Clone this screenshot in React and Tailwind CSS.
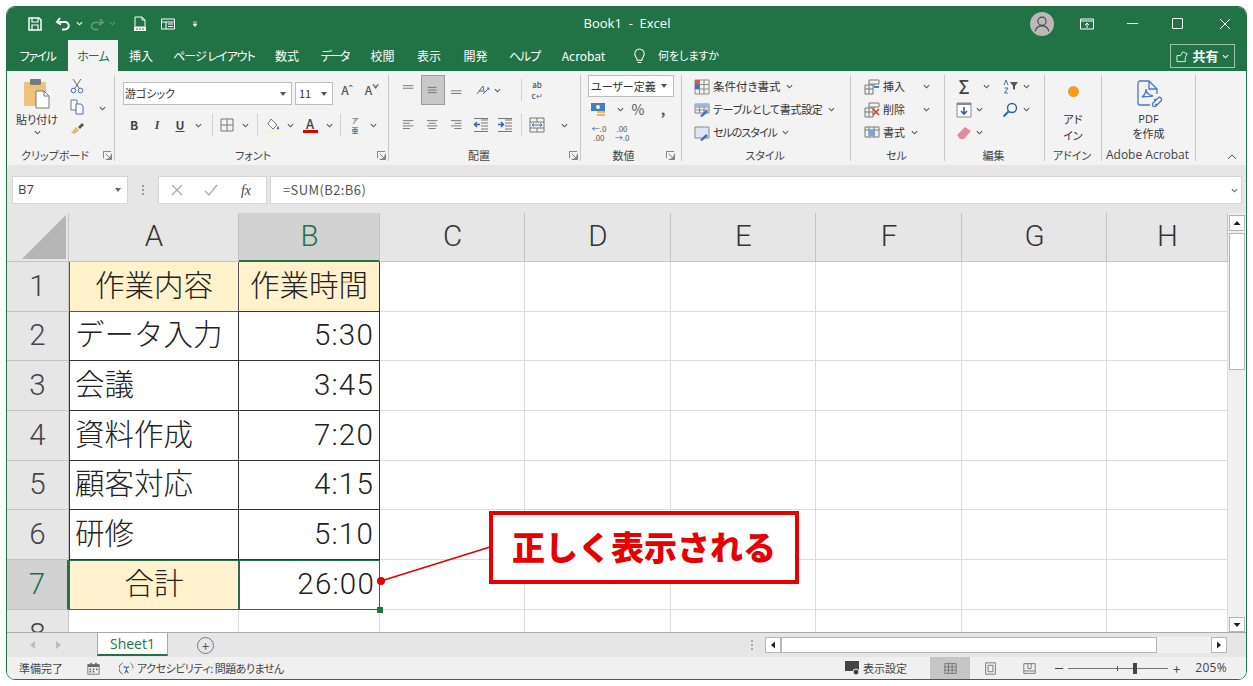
import { Fragment } from 'react'

const Chev = ({ className = 'text-[#555]' }) => (
  <svg viewBox="0 0 8 5" className={`w-[7px] h-[5px] shrink-0 ${className}`}>
    <path d="M1 1l3 3 3-3" fill="none" stroke="currentColor" strokeWidth="1.2" />
  </svg>
)

const Slot = ({ className, children }) => (
  <div className={`flex h-full shrink-0 items-center justify-center ${className}`}>{children}</div>
)

const Sep = ({ className }) => <div className={`h-[22px] w-px shrink-0 self-center bg-[#d0d0d0] ${className}`} />

const Launcher = () => (
  <svg viewBox="0 0 10 10" className="h-[9px] w-[9px] shrink-0 text-[#666]">
    <path d="M.5 8V.5H9M9.5 9.5H3M9.5 9.5V3M3 3l5.5 5.5M8.5 5v3.5H5" fill="none" stroke="currentColor" strokeWidth=".9" />
  </svg>
)

function Group({ className, label, launcher, labelClass = '', children }) {
  return (
    <div className={`flex h-full shrink-0 flex-col border-r border-[#c8c8c8] ${className}`}>
      <div className="min-h-0 flex-1">{children}</div>
      <div className={`flex h-[14px] items-center pr-[2px] pt-[2px] text-[11px] leading-none text-[#444] ${labelClass}`}>
        <span className="flex-1 whitespace-nowrap text-center">{label}</span>
        {launcher && <Launcher />}
      </div>
    </div>
  )
}

const Ico = ({ children, className = 'h-4 w-4' }) => (
  <svg viewBox="0 0 16 16" className={`shrink-0 ${className}`} fill="none">{children}</svg>
)

// horizontal text-lines icon for the alignment buttons
const Lines = ({ ys, xs }) => (
  <Ico className="h-[14px] w-[14px]">
    {ys.map((y, i) => (
      <path key={y} d={`M${xs[i][0]} ${y}H${xs[i][1]}`} stroke="#777" strokeWidth="1.1" />
    ))}
  </Ico>
)

const Paste = () => (
  <svg viewBox="0 0 26 31" className="h-[31px] w-[26px]">
    <rect x="0" y="4" width="22" height="24" rx="1" fill="#ebc37b" />
    <rect x="6" y="1" width="11" height="6" rx="1" fill="#7a7a7a" />
    <path d="M12 13h8l5 5v12H12z" fill="#fff" stroke="#777" />
    <path d="M20 13v5h5" fill="none" stroke="#777" />
  </svg>
)

const tabs = [
  ['ファイル', 'w-[61px] tracking-[-1.500px]'],
  ['ホーム', 'w-[50px] tracking-[-1px]'],
  ['挿入', 'w-[46px] text-[12px]'],
  ['ページ レイアウト', 'w-[100px] tracking-[-1px]'],
  ['数式', 'w-[46px] text-[12px]'],
  ['データ', 'w-[49px] tracking-[-2px]'],
  ['校閲', 'w-[47px] text-[12px]'],
  ['表示', 'w-[46px] text-[12px]'],
  ['開発', 'w-[47px] text-[12px]'],
  ['ヘルプ', 'w-[51px] tracking-[-1px]'],
  ['Acrobat', 'w-[67px]'],
]

const colHeads = ['A', 'B', 'C', 'D', 'E', 'F', 'G', 'H']
const rows = [
  ['作業内容', '作業時間'],
  ['データ入力', '5:30'],
  ['会議', '3:45'],
  ['資料作成', '7:20'],
  ['顧客対応', '4:15'],
  ['研修', '5:10'],
  ['合計', '26:00'],
  ['', ''],
]
const blanks = [0, 1, 2, 3, 4, 5]

const rowHead = 'flex items-center justify-center border-r border-b border-[#c4c4c4] bg-[#e6e6e6] text-[#444]'
const darkA = 'flex items-center border-x border-b border-[#333] pl-[5px] text-[#222]'
const darkB = 'flex items-center justify-end border-r border-b border-[#333] pr-[5px] tracking-[1.200px] text-[#222]'
const gridCell = 'border-r border-b border-[#dcdcdc]'

function cellA(i) {
  if (i === 0) return 'flex items-center justify-center border-x border-b border-[#555] bg-[#fff2cc] text-[#222]'
  if (i === 6) return 'flex items-center justify-center border border-[#2f6f4f] bg-[#fff2cc] text-[#222]'
  if (i === 7) return gridCell
  return darkA
}

function cellB(i) {
  if (i === 0) return 'flex items-center justify-center border-r border-b border-[#333] bg-[#fff2cc] text-[#222]'
  if (i === 6) return 'relative flex items-center justify-end border-[1.500px] border-[#217346] pr-[4px] tracking-[1.200px] text-[#222]'
  if (i === 7) return gridCell
  return darkB
}

const ScrollBtn = ({ className, d }) => (
  <div className={`flex shrink-0 items-center justify-center border border-[#b5b5b5] bg-white ${className}`}>
    <svg viewBox="0 0 8 8" className="h-2 w-2"><path d={d} fill="#222" /></svg>
  </div>
)

export default function App() {
  return (
    <div className="h-[686px] w-[1253px] overflow-hidden bg-white pl-[6px] pt-[6px] font-['Noto_Sans_CJK_JP',sans-serif] [font-feature-settings:'palt']">
      <div className="flex h-[674px] w-[1241px] flex-col overflow-hidden rounded-[9px] border border-[#217346]">
        {/* Title bar */}
        <div className="flex h-[33px] shrink-0 items-center bg-[#217346] text-white">
          <div className="flex h-full w-[199px] items-center">
            <Slot className="ml-[20px] w-[16px]">
              <Ico>
                <path d="M2 2h10l2 2v10H2z" stroke="#fff" strokeWidth="1.5" />
                <path d="M5 2v4h6V2M5 14V9h6v5" stroke="#fff" strokeWidth="1.2" />
              </Ico>
            </Slot>
            <Slot className="ml-[11px] w-[18px]">
              <Ico>
                <path d="M5 2L2 6l4 2.500M2.500 6H10a3.500 3.500 0 0 1 0 7.500H7" stroke="#fff" strokeWidth="2" />
              </Ico>
            </Slot>
            <Slot className="ml-[2px] w-[10px]"><Chev className="text-white" /></Slot>
            <Slot className="ml-[5px] w-[16px]">
              <Ico>
                <path d="M11 3l3 3.500-4 2.500M13.500 6.500H6a3.500 3.500 0 0 0 0 7h3" stroke="#5f9a7c" strokeWidth="1.700" />
              </Ico>
            </Slot>
            <Slot className="ml-[2px] w-[10px]"><Chev className="text-[#5f9a7c]" /></Slot>
            <Slot className="ml-[15px] w-[16px]">
              <Ico>
                <path d="M3 1h7l3 3v7H3zM10 1v3h3" stroke="#fff" />
                <path d="M2 11h12v4H2z" fill="#fff" />
                <path d="M4 13h2M7 13h2M10 13h2" stroke="#217346" />
              </Ico>
            </Slot>
            <Slot className="ml-[12px] w-[16px]">
              <Ico>
                <path d="M1.500 3h13v10h-13zM1.500 6h13M6 6v7M8 8h5M8 10.500h5" stroke="#fff" />
              </Ico>
            </Slot>
            <Slot className="ml-[15px] w-[8px]">
              <svg viewBox="0 0 6 6" className="h-[6px] w-[6px]"><path d="M1 1h4M1 3h4l-2 2.500z" stroke="#fff" strokeWidth=".7" fill="#fff" /></svg>
            </Slot>
          </div>
          <div className="flex-1 pl-[20px] pt-[1px] text-center font-['Open_Sans',sans-serif] text-[13px]">Book1&nbsp; - &nbsp;Excel</div>
          <div className="flex h-full w-[218px] items-center">
            <div className="ml-[2px] flex h-[24px] w-[24px] items-center justify-center rounded-full bg-[#b9b9b9]">
              <svg viewBox="0 0 24 24" className="h-[22px] w-[22px]" fill="none" stroke="#444" strokeWidth="1.2">
                <circle cx="12" cy="9" r="4.500" />
                <path d="M4.500 20c1-4 4-6 7.500-6s6.500 2 7.500 6" />
              </svg>
            </div>
            <Slot className="ml-[25px] w-[16px]">
              <Ico>
                <path d="M1.500 3h13v10h-13zM1.500 5h13" stroke="#fff" />
                <path d="M8 12V7M6 9l2-2 2 2" stroke="#fff" />
              </Ico>
            </Slot>
            <Slot className="ml-[30px] w-[14px]"><div className="h-px w-[11px] bg-white" /></Slot>
            <Slot className="ml-[31px] w-[14px]"><div className="h-[11px] w-[11px] rounded-[1px] border border-white" /></Slot>
            <Slot className="ml-[34px] w-[14px]">
              <svg viewBox="0 0 12 12" className="h-[12px] w-[12px]"><path d="M1 1l10 10M11 1L1 11" stroke="#fff" /></svg>
            </Slot>
          </div>
        </div>

        {/* Tabs */}
        <div className="flex h-[31px] shrink-0 items-end bg-[#217346] text-[12px] text-white">
          {tabs.map(([name, w]) => (
            <div
              key={name}
              className={`flex h-[31px] shrink-0 items-center justify-center whitespace-nowrap ${w} ${name === 'ホーム' ? 'bg-[#f3f3f3] text-[#217346]' : ''}`}
            >
              {name}
            </div>
          ))}
          <div className="ml-[15px] flex h-[31px] items-center">
            <svg viewBox="0 0 16 18" className="h-[18px] w-[15px]" fill="none" stroke="#fff" strokeWidth="1.1">
              <path d="M5.500 13.500c0-3-2.500-3.500-2.500-7a5 5 0 0 1 10 0c0 3.500-2.500 4-2.500 7zM6 16h4" />
            </svg>
            <span className="ml-[11px] text-[11px]">何をしますか</span>
          </div>
          <div className="flex-1" />
          <div className="mb-[3px] mr-[11px] flex h-[24px] w-[65px] items-center justify-center gap-[3px] border border-[#9cc5ae] text-[13px] font-bold">
            <svg viewBox="0 0 14 14" className="h-[13px] w-[13px]" fill="none" stroke="#fff" strokeWidth=".9">
              <path d="M1 12.500V6h4l2-4 5 2-2 4M1 12.500h9V8" />
            </svg>
            共有
            <Chev className="text-white" />
          </div>
        </div>

        {/* Ribbon */}
        <div className="flex h-[94px] shrink-0 items-stretch bg-[#f3f3f3] py-[4px] text-[#333]">
          <Group className="w-[108px]" label="クリップボード" launcher>
            <div className="flex h-full">
              <div className="ml-[1px] flex w-[58px] flex-col items-center pt-[3px]">
                <Paste />
                <span className="mt-[3px] whitespace-nowrap text-[11px] leading-[14px]">貼り付け</span>
                <div className="mt-[4px]"><Chev /></div>
              </div>
              <div className="ml-[3px] flex w-[16px] flex-col items-center gap-[5px] pt-[3px]">
                <Ico>
                  <path d="M4 1l6 9M12 1L6 10" stroke="#666" />
                  <circle cx="4.500" cy="12.500" r="2.300" stroke="#3f6fb5" />
                  <circle cx="11.500" cy="12.500" r="2.300" stroke="#3f6fb5" />
                </Ico>
                <Ico>
                  <path d="M2 1h6v10H2z" fill="#fff" stroke="#777" />
                  <path d="M7 5h5l2 2v8H7z" fill="#fff" stroke="#3f6fb5" />
                </Ico>
                <Ico>
                  <path d="M9 7l4-4 2 2-4 4z" fill="#555" />
                  <path d="M2 13l5-6 3 3-4 4z" fill="#e5b868" />
                </Ico>
              </div>
              <Slot className="ml-[9px] w-[16px] pb-[6px]"><Chev /></Slot>
            </div>
          </Group>

          <Group className="w-[274px]" label="フォント" launcher labelClass="pl-[14px]">
            <div className="flex h-[30px] items-end pl-[8px]">
              <div className="flex h-[23px] w-[169px] items-center justify-between border border-[#bdbdbd] bg-white pl-[1px] pr-[5px] text-[11px]">
                游ゴシック
                <svg viewBox="0 0 6 4" className="h-[4px] w-[6px]"><path d="M0 0h6L3 4z" fill="#555" /></svg>
              </div>
              <div className="ml-[3px] flex h-[23px] w-[38px] items-center justify-between border border-[#bdbdbd] bg-white pl-[3px] pr-[5px] text-[11px]">
                11
                <svg viewBox="0 0 6 4" className="h-[4px] w-[6px]"><path d="M0 0h6L3 4z" fill="#555" /></svg>
              </div>
              <Slot className="ml-[5px] h-[23px] w-[18px] text-[12px] font-medium text-[#555]">Aˆ</Slot>
              <Slot className="ml-[7px] h-[23px] w-[18px] text-[12px] font-medium text-[#555]">Aˇ</Slot>
            </div>
            <div className="mt-[8px] flex h-[24px] items-center pl-[8px] text-[12px] text-[#444]">
              <Slot className="w-[22px] font-bold">B</Slot>
              <Slot className="w-[24px] font-['Liberation_Serif',serif] font-bold italic">I</Slot>
              <Slot className="w-[22px] font-bold underline">U</Slot>
              <Slot className="w-[14px]"><Chev /></Slot>
              <Sep className="ml-[7px]" />
              <Slot className="ml-[6px] w-[16px]">
                <Ico>
                  <path d="M2 2h12v12H2zM8 2v12M2 8h12" stroke="#777" />
                </Ico>
              </Slot>
              <Slot className="w-[20px]"><Chev /></Slot>
              <Sep className="ml-[2px]" />
              <Slot className="ml-[1px] w-[28px]">
                <Ico>
                  <path d="M6 2l6 6-4 4-5-5z" fill="#fff" stroke="#777" />
                  <path d="M13 9c1 1.500 1.500 2 1 3-.5.500-1.500.500-2 0-.3-1 .5-2 1-3z" fill="#3f6fb5" />
                  <path d="M1 14h14v2H1z" fill="#fff0c0" />
                </Ico>
              </Slot>
              <Slot className="w-[6px]"><Chev /></Slot>
              <Slot className="w-[34px]">
                <div className="flex flex-col items-center leading-none">
                  <span className="text-[13px] font-medium leading-[13px]">A</span>
                  <div className="h-[3px] w-[15px] bg-[#e00000]" />
                </div>
              </Slot>
              <Slot className="w-[4px]"><Chev /></Slot>
              <Sep className="ml-[9px]" />
              <Slot className="ml-[9px] w-[10px] flex-col text-[7px] leading-[10px]">
                <span>ア</span>
                <span>亜</span>
              </Slot>
              <Slot className="w-[26px]"><Chev /></Slot>
            </div>
          </Group>

          <Group className="w-[192px]" label="配置" launcher>
            <div className="flex h-[30px] items-end pl-[8px]">
              <Slot className="h-[23px] w-[24px]"><Lines ys={[3, 6]} xs={[[1, 13], [1, 13]]} /></Slot>
              <Slot className="h-[23px] w-[24px] border border-[#9a9a9a] bg-[#c8c8c8]"><Lines ys={[5, 8, 11]} xs={[[2, 12], [2, 12], [2, 12]]} /></Slot>
              <Slot className="h-[23px] w-[24px]"><Lines ys={[9, 12]} xs={[[1, 13], [1, 13]]} /></Slot>
              <Slot className="ml-[6px] h-[23px] w-[16px]">
                <Ico>
                  <path d="M2 12L8 4l1 6M4 9h4" stroke="#666" />
                  <path d="M8 12l6-6M12 6h2v2" stroke="#3f6fb5" />
                </Ico>
              </Slot>
              <Slot className="h-[23px] w-[12px]"><Chev /></Slot>
              <Sep className="ml-[18px]" />
              <Slot className="ml-[7px] h-[23px] w-[16px] flex-col text-[8px] font-medium leading-[11px] text-[#555]">
                <span>ab</span>
                <span>c<span className="text-[#3f6fb5]">↵</span></span>
              </Slot>
            </div>
            <div className="mt-[8px] flex h-[24px] items-center pl-[8px]">
              <Slot className="w-[24px]"><Lines ys={[3, 6, 9, 12]} xs={[[1, 13], [1, 9], [1, 13], [1, 9]]} /></Slot>
              <Slot className="w-[24px]"><Lines ys={[3, 6, 9, 12]} xs={[[1, 13], [3, 11], [1, 13], [3, 11]]} /></Slot>
              <Slot className="w-[24px]"><Lines ys={[3, 6, 9, 12]} xs={[[1, 13], [5, 13], [1, 13], [5, 13]]} /></Slot>
              <Slot className="w-[24px]">
                <Ico>
                  <path d="M8 3h7M8 6h7M8 9h7M8 12h7M1 14.500h14M1 1.500h14" stroke="#777" />
                  <path d="M7 7.500H1.500M4 5L1.500 7.500 4 10" stroke="#2b62a8" strokeWidth="1.400" />
                </Ico>
              </Slot>
              <Slot className="w-[24px]">
                <Ico>
                  <path d="M8 3h7M8 6h7M8 9h7M8 12h7M1 14.500h14M1 1.500h14" stroke="#777" />
                  <path d="M1 7.500h5.500M4 5l2.500 2.500L4 10" stroke="#2b62a8" strokeWidth="1.400" />
                </Ico>
              </Slot>
              <Sep className="ml-[4px]" />
              <Slot className="ml-[7px] w-[16px]">
                <Ico>
                  <path d="M1 1h14v14H1zM1 5h14M1 11h14M8 1v4M8 11v4" stroke="#777" />
                  <path d="M3 8h10M5 6.500L3 8l2 1.500M11 6.500L13 8l-2 1.500" stroke="#3f6fb5" />
                </Ico>
              </Slot>
              <Slot className="ml-[15px] w-[8px]"><Chev /></Slot>
            </div>
          </Group>

          <Group className="w-[101px]" label="数値" launcher labelClass="pr-[6px]">
            <div className="ml-[7px] flex h-[22px] w-[86px] items-center justify-between border border-[#bdbdbd] bg-white pl-[2px] pr-[6px] text-[11px]">
              ユーザー定義
              <svg viewBox="0 0 6 4" className="h-[4px] w-[6px]"><path d="M0 0h6L3 4z" fill="#555" /></svg>
            </div>
            <div className="flex h-[24px] items-center pl-[9px]">
              <Slot className="w-[16px]">
                <Ico>
                  <path d="M1 2h14v8H1z" fill="#3f7fc0" />
                  <circle cx="8" cy="6" r="2" fill="#fff" />
                  <path d="M7 10h8v2H7zM7 13h8v2H7z" fill="#e5b868" />
                </Ico>
              </Slot>
              <Slot className="ml-[10px] w-[8px]"><Chev /></Slot>
              <Slot className="ml-[2px] w-[24px] text-[14px] text-[#555]">%</Slot>
              <Slot className="ml-[3px] w-[20px] text-[14px] font-bold text-[#555]">,</Slot>
            </div>
            <div className="flex h-[23px] items-center pl-[10px] text-[8px] leading-[9px] text-[#555]">
              <Slot className="w-[16px] flex-col">
                <span><span className="text-[#2b62a8]">←</span>.0</span>
                <span>.00</span>
              </Slot>
              <Slot className="ml-[7px] w-[16px] flex-col">
                <span>.00</span>
                <span><span className="text-[#2b62a8]">→</span>.0</span>
              </Slot>
            </div>
          </Group>

          <Group className="w-[169px]" label="スタイル">
            <div className="flex flex-col pl-[12px] text-[11px]">
              <div className="flex h-[23px] items-center gap-[3px] whitespace-nowrap">
                <Ico>
                  <path d="M1 1h14v14H1zM1 5.500h14M1 10h14M5.500 1v14M10 1v14" stroke="#888" />
                  <path d="M1 1h4.500v4.500H1z" fill="#d9534f" />
                  <path d="M1 5.500h4.500V10H1z" fill="#3f6fb5" />
                </Ico>
                <span className="text-[11.500px]">条件付き書式</span>
                <Chev className="ml-[2px] text-[#555]" />
              </div>
              <div className="flex h-[23px] items-center gap-[3px] whitespace-nowrap">
                <Ico>
                  <path d="M1 2h14v9H1zM1 5h14M1 8h14M5.500 2v9M10 2v9" stroke="#888" />
                  <path d="M1 2h14v3H1z" fill="#9db7d8" />
                  <path d="M6 14l6-6 2 2-6 5z" fill="#3f6fb5" />
                </Ico>
                <span className="tracking-[-0.300px]">テーブルとして書式設定</span>
                <Chev className="ml-[2px] text-[#555]" />
              </div>
              <div className="flex h-[23px] items-center gap-[3px] whitespace-nowrap">
                <Ico>
                  <path d="M1 2h14v11H1z" fill="#dfe6ef" stroke="#888" />
                  <path d="M6 15l6-6 2 2-6 5z" fill="#3f6fb5" />
                </Ico>
                <span className="tracking-[-1px]">セルのスタイル</span>
                <Chev className="ml-[2px] text-[#555]" />
              </div>
            </div>
          </Group>

          <Group className="w-[94px]" label="セル">
            <div className="flex flex-col pl-[13px] text-[11px]">
              <div className="flex h-[23px] items-center">
                <Ico>
                  <path d="M5 1h10v4H5zM1 6h10M1 6v9h8V6M1 10h8M5 6v9" stroke="#777" />
                  <path d="M10 8h5" stroke="#3f7fc0" strokeWidth="2" />
                </Ico>
                <span className="ml-[3px] w-[23px] whitespace-nowrap">挿入</span>
                <Slot className="ml-[16px] w-[8px]"><Chev /></Slot>
              </div>
              <div className="flex h-[23px] items-center">
                <Ico>
                  <path d="M5 1h10v4H5zM1 6h10M1 6v9h8V6M1 10h8M5 6v9" stroke="#777" />
                  <path d="M9 7l6 6M15 7l-6 6" stroke="#d9362b" strokeWidth="1.600" />
                </Ico>
                <span className="ml-[3px] w-[23px] whitespace-nowrap">削除</span>
                <Slot className="ml-[16px] w-[8px]"><Chev /></Slot>
              </div>
              <div className="flex h-[23px] items-center">
                <Ico>
                  <path d="M1 2h14v10H1zM1 5h14M5 2v10M10 2v10" stroke="#777" />
                  <path d="M5 5h6v6H5z" fill="#7aa5d6" />
                </Ico>
                <span className="ml-[3px] w-[23px] whitespace-nowrap">書式</span>
                <Slot className="ml-[4px] w-[8px]"><Chev /></Slot>
              </div>
            </div>
          </Group>

          <Group className="w-[100px]" label="編集">
            <div className="flex flex-col pl-[11px]">
              <div className="flex h-[23px] items-center">
                <Slot className="w-[16px] text-[18px] font-medium text-[#444]">Σ</Slot>
                <Slot className="ml-[10px] w-[8px]"><Chev /></Slot>
                <Slot className="ml-[13px] w-[16px]">
                  <Ico>
                    <path d="M1 6l2-5 2 5M1.500 9h3.500l-3.500 5H5" stroke="#3f6fb5" />
                    <path d="M7 3h8l-3 4v4l-2-1V7z" fill="#555" />
                  </Ico>
                </Slot>
                <Slot className="ml-[3px] w-[8px]"><Chev /></Slot>
              </div>
              <div className="flex h-[23px] items-center">
                <Ico>
                  <path d="M1 1h14v14H1z" fill="#fff" stroke="#888" />
                  <path d="M1 1h14v2H1z" fill="#888" />
                  <path d="M8 5v7M5 9l3 3 3-3" stroke="#2b62a8" strokeWidth="1.600" />
                </Ico>
                <Slot className="ml-[3px] w-[8px]"><Chev /></Slot>
                <Slot className="ml-[19px] w-[16px]">
                  <Ico>
                    <circle cx="10" cy="6" r="4.500" stroke="#2b62a8" strokeWidth="1.400" />
                    <path d="M6.500 9.500L1.500 14.500" stroke="#2b62a8" strokeWidth="1.800" />
                  </Ico>
                </Slot>
                <Slot className="ml-[4px] w-[8px]"><Chev /></Slot>
              </div>
              <div className="flex h-[23px] items-center">
                <Ico>
                  <path d="M1 10l8-8 6 4-7 8H4z" fill="#e58aa0" />
                </Ico>
                <Slot className="ml-[3px] w-[8px]"><Chev /></Slot>
              </div>
            </div>
          </Group>

          <Group className="w-[57px]" label="アドイン">
            <div className="flex flex-col items-center pt-[11px] text-[11px] leading-[16px]">
              <div className="h-[11px] w-[11px] rounded-full bg-[#f79a1e]" />
              <span className="mt-[14px]">アド</span>
              <span>イン</span>
            </div>
          </Group>

          <Group className="w-[94px]" label="Adobe Acrobat" labelClass="pr-0 font-['Open_Sans',sans-serif] !text-[12px]">
            <div className="flex flex-col items-center pt-[4px] text-[11px] leading-[15px]">
              <svg viewBox="0 0 30 30" className="h-[30px] w-[30px]" fill="none" stroke="#4a78c2" strokeWidth="1.300">
                <path d="M16 26H6a2 2 0 0 1-2-2V4a2 2 0 0 1 2-2h9l8 8v5M15 2v8h8" />
                <path d="M8 18c3-2 4-5 4-8 0 3 2 6 7 7-3 0-6 .5-11 1z" />
                <path d="M19 24l5-5a2 2 0 0 1 3 3l-5 5a2 2 0 0 1-3-3zM20 21a2 2 0 0 1 3 0M24 25a2 2 0 0 1-3 0" />
              </svg>
              <span className="mt-[2px] font-['Open_Sans',sans-serif]">PDF</span>
              <span>を作成</span>
            </div>
          </Group>

          <div className="flex flex-1 items-end justify-end pb-[1px] pr-[9px]">
            <svg viewBox="0 0 10 6" className="h-[6px] w-[10px]"><path d="M1 5l4-4 4 4" fill="none" stroke="#555" /></svg>
          </div>
        </div>

        {/* Formula bar */}
        <div className="flex h-[48px] shrink-0 items-start bg-[#e6e6e6] pl-[5px] pr-[4px] pt-[11px]">
          <div className="flex h-[28px] w-[116px] items-center justify-between border border-[#d4d4d4] bg-white pl-[5px] pr-[6px] font-['Open_Sans',sans-serif] text-[13px] text-[#444]">
            B7
            <svg viewBox="0 0 6 4" className="h-[4px] w-[6px]"><path d="M0 0h6L3 4z" fill="#666" /></svg>
          </div>
          <div className="flex h-[28px] w-[30px] flex-col items-center justify-center gap-[2px]">
            <div className="h-[2px] w-[2px] bg-[#999]" />
            <div className="h-[2px] w-[2px] bg-[#999]" />
            <div className="h-[2px] w-[2px] bg-[#999]" />
          </div>
          <div className="flex h-[28px] w-[109px] items-center border border-[#d4d4d4] bg-white">
            <Slot className="ml-[11px] w-[14px]">
              <svg viewBox="0 0 12 12" className="h-[12px] w-[12px]"><path d="M1 1l10 10M11 1L1 11" stroke="#aaa" strokeWidth="1.300" /></svg>
            </Slot>
            <Slot className="ml-[20px] w-[14px]">
              <svg viewBox="0 0 14 12" className="h-[12px] w-[14px]"><path d="M1 7l4 4 8-10" fill="none" stroke="#aaa" strokeWidth="1.300" /></svg>
            </Slot>
            <Slot className="ml-[21px] w-[14px] font-['Liberation_Serif',serif] text-[14px] italic text-[#444]">fx</Slot>
          </div>
          <div className="ml-[3px] flex h-[28px] flex-1 items-center justify-between border border-[#d4d4d4] bg-white pl-[12px] pr-[3px] text-[13px] tracking-[0.4px] text-[#555]">
            =SUM(B2:B6)
            <Chev className="text-[#666]" />
          </div>
        </div>

        {/* Grid and vertical scrollbar */}
        <div className="relative flex h-[419px] shrink-0">
          <div className="grid h-[419px] w-[1221px] grid-cols-[62px_170px_141px_145px_146px_145px_146px_145px_121px] grid-rows-[49px_50px_49px_50px_50px_49px_50px_50px_50px] overflow-hidden bg-white font-['Roboto','Noto_Sans_CJK_JP',sans-serif] text-[29.500px] font-light leading-none [font-feature-settings:normal]">
            <div className="flex items-end justify-end border-r border-b border-[#c4c4c4] bg-[#e6e6e6] pb-[2px] pr-[2px]">
              <svg viewBox="0 0 44 44" className="h-[44px] w-[44px]"><path d="M44 0v44H0z" fill="#b5b5b5" /></svg>
            </div>
            {colHeads.map((c) => (
              <div
                key={c}
                className={
                  c === 'B'
                    ? 'flex items-center justify-center border-r border-b-2 border-r-[#c4c4c4] border-b-[#217346] bg-[#d2d2d2] pl-[1px] text-[#217346]'
                    : 'flex items-center justify-center border-r border-b border-[#c4c4c4] bg-[#e6e6e6] pl-[1px] text-[#333]'
                }
              >
                {c}
              </div>
            ))}
            {rows.map((r, i) => (
              <Fragment key={i}>
                <div className={i === 6 ? 'flex items-center justify-center border-r-2 border-b border-r-[#217346] border-b-[#c4c4c4] bg-[#d2d2d2] text-[#217346]' : rowHead}>
                  {i + 1}
                </div>
                <div className={cellA(i)}>{r[0]}</div>
                <div className={cellB(i)}>
                  {r[1]}
                  {i === 6 && <div className="absolute -bottom-[4px] -right-[4px] z-10 h-[6px] w-[6px] bg-[#217346]" />}
                </div>
                {blanks.map((b) => (
                  <div key={b} className={gridCell} />
                ))}
              </Fragment>
            ))}
          </div>

          <div className="flex w-[18px] shrink-0 flex-col items-center bg-[#f0f0f0] pt-[2px]">
            <ScrollBtn className="h-[16px] w-[16px]" d="M4 2l3.500 4h-7z" />
            <div className="mt-[2px] h-[137px] w-[16px] border border-[#b5b5b5] bg-white" />
            <div className="flex-1" />
            <ScrollBtn className="h-[15px] w-[16px]" d="M4 6L.5 2h7z" />
          </div>

          {/* Callout */}
          <svg viewBox="0 0 122 50" className="absolute left-[368px] top-[327px] z-20 h-[50px] w-[122px]">
            <path d="M6 41L115 7" stroke="#e60000" strokeWidth="1.800" />
            <circle cx="6" cy="41" r="4" fill="#e60000" />
          </svg>
          <div className="absolute left-[482px] top-[298px] z-20 flex h-[73px] w-[310px] items-center justify-center border-[4px] border-[#e60000] bg-white pb-[2px] text-[33px] font-black leading-none text-[#e60000] [font-feature-settings:normal]">
            正しく表示される
          </div>
        </div>

        {/* Sheet tabs */}
        <div className="flex h-[25px] shrink-0 items-start border-t border-[#aaa] bg-[#e6e6e6]">
          <Slot className="ml-[22px] h-[24px] w-[8px]">
            <svg viewBox="0 0 6 8" className="h-[8px] w-[6px]"><path d="M5 0v8L0 4z" fill="#bbb" /></svg>
          </Slot>
          <Slot className="ml-[17px] h-[24px] w-[8px]">
            <svg viewBox="0 0 6 8" className="h-[8px] w-[6px]"><path d="M1 0v8l5-4z" fill="#bbb" /></svg>
          </Slot>
          <div className="ml-[35px] flex h-[23px] w-[71px] items-center justify-center border-x border-b-2 border-x-[#aaa] border-b-[#217346] bg-white font-['Open_Sans',sans-serif] text-[14px] text-[#217346]">
            Sheet1
          </div>
          <Slot className="ml-[29px] h-[24px] w-[17px]">
            <div className="flex h-[17px] w-[17px] items-center justify-center rounded-full border border-[#777] text-[13px] leading-none text-[#555]">+</div>
          </Slot>
          <div className="ml-[536px] flex h-[24px] w-[3px] flex-col items-center justify-center gap-[2px]">
            <div className="h-[2px] w-[2px] bg-[#aaa]" />
            <div className="h-[2px] w-[2px] bg-[#aaa]" />
            <div className="h-[2px] w-[2px] bg-[#aaa]" />
          </div>
          <div className="ml-[12px] mt-[4px] flex h-[16px] w-[462px] items-stretch bg-[#f0f0f0]">
            <ScrollBtn className="w-[16px]" d="M2 4l4-3.500v7z" />
            <div className="w-[376px] border border-[#b5b5b5] bg-white" />
            <div className="flex-1" />
            <ScrollBtn className="w-[16px]" d="M6 4L2 .5v7z" />
          </div>
        </div>

        {/* Status bar */}
        <div className="flex flex-1 items-center bg-[#f0f0f0] pl-[12px] pr-[19px] text-[11px] text-[#444]">
          <span className="w-[47px] whitespace-nowrap">準備完了</span>
          <Slot className="ml-[20px] w-[14px]">
            <Ico className="h-[13px] w-[13px]">
              <path d="M1 3h14v12H1z" stroke="#666" />
              <path d="M1 3h14v3H1zM4 1h2v3H4zM10 1h2v3h-2zM3 8h2v2H3zM7 8h2v2H7zM11 8h2v2h-2zM3 11h2v2H3zM7 11h2v2H7z" fill="#666" />
            </Ico>
          </Slot>
          <Slot className="ml-[18px] w-[16px]">
            <Ico className="h-[15px] w-[15px]">
              <path d="M4 2a6.500 6.500 0 0 0 0 12M12 2c2 1.500 3 3.500 3 6" stroke="#666" />
              <path d="M5 6l3 1 3-1M8 7v3l-2 3M8 10l2 3" stroke="#3a6ea5" strokeWidth="1.200" />
            </Ico>
          </Slot>
          <span className="ml-[3px] whitespace-nowrap tracking-[-0.500px]">アクセシビリティ: 問題ありません</span>
          <div className="flex-1" />
          <Slot className="w-[16px]">
            <Ico>
              <path d="M0 1h14v10H0z" fill="#444" />
              <circle cx="11" cy="12" r="3" fill="#444" stroke="#f0f0f0" />
            </Ico>
          </Slot>
          <span className="ml-[2px] w-[47px] whitespace-nowrap">表示設定</span>
          <Slot className="ml-[20px] w-[40px] bg-[#c6c6c6]">
            <Ico className="h-[13px] w-[13px]"><path d="M1 2h14v12H1zM1 6h14M1 10h14M5.500 2v12M10 2v12" stroke="#666" /></Ico>
          </Slot>
          <Slot className="w-[40px]">
            <Ico className="h-[13px] w-[13px]"><path d="M2 1h12v14H2zM5 4h6v8H5z" stroke="#666" /></Ico>
          </Slot>
          <Slot className="w-[38px]">
            <Ico className="h-[13px] w-[13px]"><path d="M1 2h14v12H1zM1 11h14M6 2v6h4V2" stroke="#666" /></Ico>
          </Slot>
          <div className="ml-[7px] h-px w-[8px] bg-[#444]" />
          <div className="ml-[5px] flex w-[100px] items-center">
            <div className="h-px w-[49px] bg-[#777]" />
            <div className="h-[5px] w-px bg-[#555]" />
            <div className="h-px w-[15px] bg-[#777]" />
            <div className="h-[11px] w-[4px] bg-[#444]" />
            <div className="h-px flex-1 bg-[#777]" />
          </div>
          <span className="ml-[5px] text-[13px] leading-none">+</span>
          <span className="ml-[15px] font-['Open_Sans',sans-serif] text-[12px] tracking-[0.3px]">205%</span>
        </div>
      </div>
    </div>
  )
}
